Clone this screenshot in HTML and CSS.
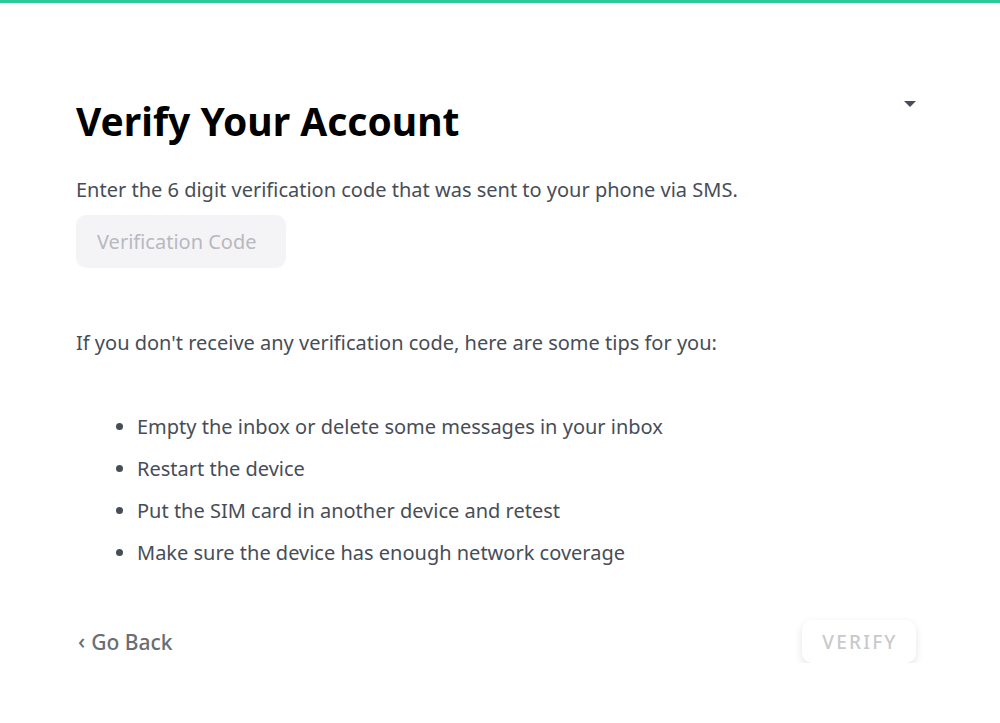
FILE: index.html
```html
<!DOCTYPE html>
<html lang="en">
<head>
<meta charset="utf-8">
<title>Verify Your Account</title>
<link rel="stylesheet" href="styles.css">
</head>
<body>
<div class="topbar"></div>
<main class="page">
  <header class="header">
    <h1 class="title">Verify Your Account</h1>
    <span class="caret"></span>
  </header>
  <p class="desc">Enter the 6 digit verification code that was sent to your phone via SMS.</p>
  <div class="field">
    <input class="code-input" type="text" placeholder="Verification Code">
  </div>
  <p class="tips-intro">If you don't receive any verification code, here are some tips for you:</p>
  <ul class="tips">
    <li>Empty the inbox or delete some messages in your inbox</li>
    <li>Restart the device</li>
    <li>Put the SIM card in another device and retest</li>
    <li>Make sure the device has enough network coverage</li>
  </ul>
  <footer class="actions">
    <a class="back" href="#"><span class="back-arrow">‹</span>Go Back</a>
    <button class="verify" type="button">VERIFY</button>
  </footer>
</main>
</body>
</html>
```

FILE: styles.css
```css
* { box-sizing: border-box; }
html, body { margin: 0; padding: 0; background: #fff; }
body {
  font-family: "Noto Sans", "Open Sans", sans-serif;
  color: #474d57;
}
.topbar { height: 3px; background: #2ec99b; }
.page {
  padding: 0 84px 0 76px;
}
.header {
  display: flex;
  justify-content: space-between;
  align-items: flex-start;
  margin-top: 94px;
}
.title {
  margin: 0;
  font-size: 39px;
  line-height: 48px;
  font-weight: 700;
  color: #000;
}
.caret {
  margin-top: 4px;
  width: 0; height: 0;
  border-left: 6px solid transparent;
  border-right: 6px solid transparent;
  border-top: 6px solid #474d57;
}
.desc {
  margin: 31px 0 0;
  font-size: 20px;
  line-height: 28px;
}
.field { margin-top: 11px; }
.code-input {
  display: block;
  width: 210px;
  height: 53px;
  border: none;
  outline: none;
  background: #f4f4f7;
  border-radius: 10px;
  padding: 0 21px;
  font-family: inherit;
  font-size: 20px;
  color: #474d57;
}
.code-input::placeholder { color: #b7b9be; }
.tips-intro {
  margin: 61px 0 0;
  font-size: 20px;
  line-height: 28px;
}
.tips {
  margin: 56px 0 0;
  padding-left: 61px;
  font-size: 20px;
  line-height: 28px;
}
.tips li { margin-bottom: 14px; }
.tips li:last-child { margin-bottom: 0; }
.actions {
  margin-top: 53px;
  display: flex;
  justify-content: space-between;
  align-items: center;
}
.back {
  display: flex;
  align-items: center;
  gap: 6px;
  font-size: 21px;
  font-weight: 500;
  color: #6a6d73;
  text-decoration: none;
  padding-left: 2px;
}
.back-arrow { font-size: 22px; line-height: 1; margin-top: -4px; }
.verify {
  width: 114px;
  height: 43px;
  border: none;
  border-radius: 10px;
  background: #fff;
  box-shadow: 0 3px 9px rgba(0,0,0,0.11);
  font-family: inherit;
  font-size: 19px;
  font-weight: 500;
  letter-spacing: 2.2px;
  padding: 0 0 0 2px;
  color: #c8c9cc;
}
```
